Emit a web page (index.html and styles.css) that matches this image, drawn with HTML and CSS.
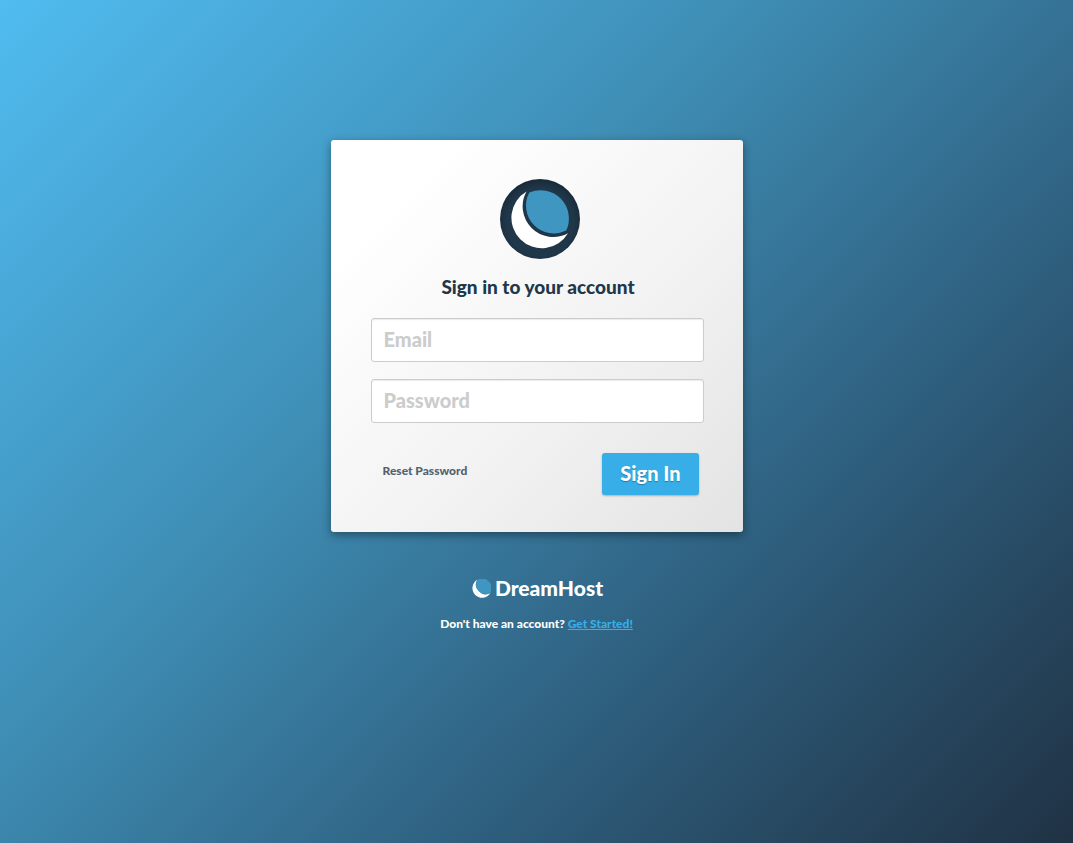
FILE: index.html
```html
<!DOCTYPE html>
<html lang="en">
<head>
<meta charset="utf-8">
<meta name="viewport" content="width=device-width, initial-scale=1">
<title>Sign in - DreamHost</title>
<link rel="stylesheet" href="styles.css">
</head>
<body>
<main class="page">
  <form class="card">
    <svg class="emblem" viewBox="0 0 80 80" role="img" aria-label="DreamHost moon">
      <defs>
        <radialGradient id="disc" cx="50%" cy="54%" r="54%">
          <stop offset="0.78" stop-color="#20374a"/>
          <stop offset="1" stop-color="#182a38"/>
        </radialGradient>
      </defs>
      <circle cx="40" cy="40" r="40" fill="url(#disc)"/>
      <path d="M26.5 12.5A30.4 30.4 0 1 0 68 54.2A30.6 30.6 0 0 1 26.5 12.5Z" fill="#fff"/>
      <path d="M29.3 13.6A28.3 28.3 0 0 1 66.2 51.6A27.8 27.8 0 0 1 29.3 13.6Z" fill="#3f96c0"/>
    </svg>
    <h1 class="title">Sign in to your account</h1>
    <input class="field" type="email" placeholder="Email" aria-label="Email">
    <input class="field" type="password" placeholder="Password" aria-label="Password">
    <div class="actions">
      <a class="reset" href="#">Reset Password</a>
      <button class="submit" type="submit">Sign In</button>
    </div>
  </form>
  <footer class="footer">
    <div class="brand">
      <svg class="brand-moon" viewBox="10 10 60 60" aria-hidden="true">
        <path d="M26.5 12.5A30.4 30.4 0 1 0 68 54.2A30.6 30.6 0 0 1 26.5 12.5Z" fill="#fff"/>
        <path d="M27.5 13A29.5 29.5 0 0 1 67.5 53A29.5 29.5 0 0 1 27.5 13Z" fill="#3f96c0" stroke="#3f96c0" stroke-width="2"/>
      </svg>
      <span>DreamHost</span>
    </div>
    <p class="signup">Don't have an account? <a class="signup-link" href="#">Get Started!</a></p>
  </footer>
</main>
</body>
</html>
```
FILE: styles.css
```css
* {
  box-sizing: border-box;
}

body {
  margin: 0;
  font-family: Lato, "Open Sans", sans-serif;
  font-weight: 900;
}

.page {
  min-height: 100vh;
  padding: 140px 16px 40px;
  display: flex;
  flex-direction: column;
  align-items: center;
  background: linear-gradient(135deg, #50bcf0 0%, #3f8fb7 38%, #2e5e7d 69%, #203244 100%);
}

.card {
  width: 100%;
  max-width: 412px;
  padding: 39px 39px 37px 40px;
  display: flex;
  flex-direction: column;
  border-radius: 3px;
  background: linear-gradient(135deg, #fff 0%, #fff 15%, #f2f2f2 60%, #e3e3e3 100%);
  box-shadow: 0 3px 10px rgba(0, 0, 0, 0.4);
}

.emblem {
  width: 80px;
  height: 80px;
  margin-left: 5px;
  align-self: center;
}

.title {
  margin: 16px 0 19px;
  padding-left: 2px;
  font-size: 19px;
  font-weight: 900;
  line-height: 24px;
  text-align: center;
  color: #20374a;
}

.field {
  width: 100%;
  height: 44px;
  margin-bottom: 17px;
  padding: 0 12px 2px;
  border: 1px solid #ccc;
  border-radius: 3px;
  background: #fff;
  box-shadow: inset 0 1px 1px rgba(0, 0, 0, 0.08);
  font: inherit;
  font-size: 20px;
  color: #20374a;
}

.field::placeholder {
  color: #ccc;
  opacity: 1;
}

.actions {
  margin-top: 13px;
  padding: 0 5px 0 12px;
  display: flex;
  align-items: center;
  justify-content: space-between;
}

.reset {
  padding-bottom: 6px;
  font-size: 12px;
  line-height: 16px;
  color: #536270;
  text-decoration: none;
}

.submit {
  height: 42px;
  padding: 0 18px 2px;
  border: 0;
  border-radius: 3px;
  background: #37aee7;
  box-shadow: 0 1px 2px rgba(0, 0, 0, 0.25);
  font: inherit;
  font-size: 20px;
  color: #fff;
  text-shadow: 0 1px 1px rgba(0, 0, 0, 0.3);
}

.footer {
  margin-top: 44px;
  text-align: center;
  color: #fff;
}

.brand {
  display: flex;
  align-items: center;
  justify-content: center;
  gap: 4px;
  padding-left: 2px;
  font-size: 21px;
  line-height: 24px;
}

.brand-moon {
  width: 19px;
  height: 19px;
}

.signup {
  margin: 16px 0 0;
  font-size: 12px;
  line-height: 16px;
}

.signup-link {
  color: #37aee7;
}
```
